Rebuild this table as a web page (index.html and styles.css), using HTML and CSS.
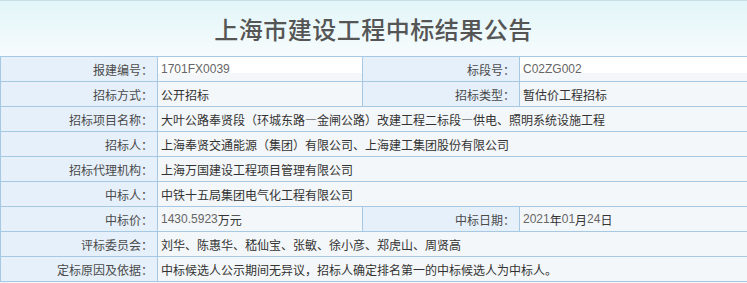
FILE: index.html
```html
<!DOCTYPE html>
<html lang="zh-CN">
<head>
<meta charset="utf-8">
<title>上海市建设工程中标结果公告</title>
<link rel="stylesheet" href="styles.css">
</head>
<body>
<div class="page">
  <header class="head">
    <h1 class="title">上海市建设工程中标结果公告</h1>
  </header>
  <div class="grid">
    <div class="lab">报建编号：</div>
    <div class="val top num">1701FX0039</div>
    <div class="lab">标段号：</div>
    <div class="val top num">C02ZG002</div>

    <div class="lab">招标方式：</div>
    <div class="val">公开招标</div>
    <div class="lab">招标类型：</div>
    <div class="val">暂估价工程招标</div>

    <div class="lab">招标项目名称：</div>
    <div class="val wide">大叶公路奉贤段（环城东路—金闸公路）改建工程二标段—供电、照明系统设施工程</div>

    <div class="lab">招标人：</div>
    <div class="val wide">上海奉贤交通能源（集团）有限公司、上海建工集团股份有限公司</div>

    <div class="lab">招标代理机构：</div>
    <div class="val wide">上海万国建设工程项目管理有限公司</div>

    <div class="lab">中标人：</div>
    <div class="val wide">中铁十五局集团电气化工程有限公司</div>

    <div class="lab">中标价：</div>
    <div class="val"><span class="num">1430.5923</span>万元</div>
    <div class="lab">中标日期：</div>
    <div class="val"><span class="num">2021</span>年<span class="num">01</span>月<span class="num">24</span>日</div>

    <div class="lab">评标委员会：</div>
    <div class="val wide">刘华、陈惠华、嵇仙宝、张敏、徐小彦、郑虎山、周贤高</div>

    <div class="lab">定标原因及依据：</div>
    <div class="val wide">中标候选人公示期间无异议，招标人确定排名第一的中标候选人为中标人。</div>
  </div>
</div>
</body>
</html>
```

FILE: styles.css
```css
html, body {
  margin: 0;
  padding: 0;
  overflow: hidden;
}

body {
  background: #f4f7f9;
  font-family: "Noto Sans CJK SC", "Liberation Sans", sans-serif;
  font-size: 12px;
  color: #333;
}

.page {
  width: 747px;
}

.head {
  height: 55px;
  border-top: 1px solid #c9dde8;
  background: linear-gradient(#e2f5f8, #f7fcfd);
  display: flex;
  align-items: center;
  justify-content: center;
}

.title {
  margin: 0;
  font-size: 24px;
  font-weight: 500;
  color: #555;
  letter-spacing: 0.5px;
  line-height: 1;
}

.grid {
  display: grid;
  grid-template-columns: 156px 204px 156px 1fr;
  grid-auto-rows: 24px;
  gap: 1px;
  padding: 1px 0 1px 1px;
  background: #a6c8e2;
}

.lab {
  background: #e6f0fa;
  color: #4a4a4a;
  text-align: right;
  padding-right: 4px;
  display: flex;
  align-items: center;
  justify-content: flex-end;
  white-space: nowrap;
}

.val {
  background: #f4f7f9;
  padding-left: 3px;
  display: flex;
  align-items: center;
  white-space: nowrap;
  color: #333;
}

.val.top {
  background: linear-gradient(#ffffff 16px, #f4f7f9 16px);
}

.wide {
  grid-column: span 3;
}

.num {
  font-family: "Liberation Sans", "DejaVu Sans", sans-serif;
  font-size: 12px;
  color: #666;
}
```
